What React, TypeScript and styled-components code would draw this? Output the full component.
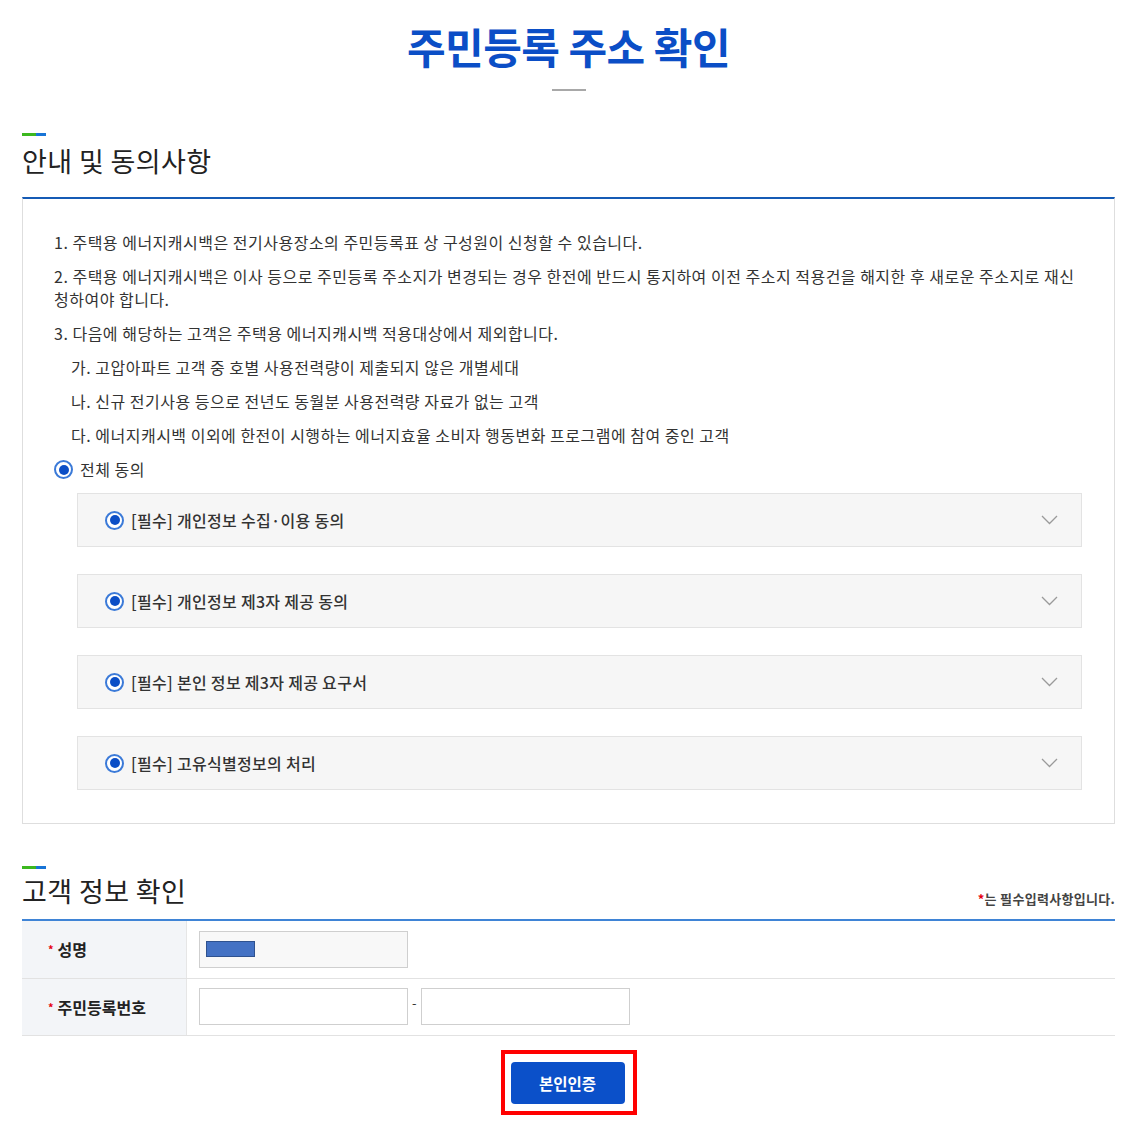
import React from 'react'
import styled, { createGlobalStyle } from 'styled-components'

const GlobalStyle = createGlobalStyle`
    html, body {
        margin: 0;
        padding: 0;
        background: #fff;
    }
    body {
        font-family: 'Noto Sans CJK KR', 'Noto Sans', sans-serif;
        color: #333;
    }
    * {
        box-sizing: border-box;
    }
`

const Page = styled.div`
    width: 1093px;
    margin-left: 22px;
    padding-bottom: 10px;
`

const TitleWrap = styled.div`
    display: flex;
    flex-direction: column;
    align-items: center;
    padding-top: 21px;
`

const Title = styled.h1`
    margin: 0;
    font-size: 42px;
    line-height: 50px;
    font-weight: 700;
    color: #0b4ec6;
    letter-spacing: -0.5px;
`

const TitleDash = styled.span`
    display: block;
    width: 34px;
    height: 2px;
    margin-top: 18px;
    background: #a8a8a8;
`

const SectionHead = styled.div<{ $top: number; $gap: number }>`
    margin-top: ${(p) => p.$top}px;
    &::before {
        content: '';
        display: block;
        width: 24px;
        height: 3px;
        margin-bottom: ${(p) => p.$gap}px;
        background: linear-gradient(90deg, #3cb81e 0 14px, #1874d6 14px 24px);
    }
`

const HeadRow = styled.div<{ $bottom: number }>`
    display: flex;
    justify-content: space-between;
    align-items: flex-end;
    margin-bottom: ${(p) => p.$bottom}px;
`

const SectionTitle = styled.h2`
    margin: 0;
    font-size: 27px;
    line-height: 34px;
    font-weight: 400;
    color: #222;
    letter-spacing: 0.4px;
`

const Note = styled.span`
    font-size: 13px;
    line-height: 18px;
    font-weight: 700;
    color: #444;
    letter-spacing: 0.3px;
`

const Star = styled.span`
    color: #e60012;
`

const AgreeBox = styled.div`
    border-top: 2px solid #155bb5;
    border-left: 1px solid #dedede;
    border-right: 1px solid #dedede;
    border-bottom: 1px solid #dedede;
    padding: 32px 32px 33px 31px;
`

const List = styled.ol`
    list-style: none;
    margin: 0;
    padding: 0;
`

const Item = styled.li<{ $sub?: boolean }>`
    font-size: 16px;
    line-height: 23px;
    margin-bottom: 11px;
    padding-left: ${(p) => (p.$sub ? 17 : 0)}px;
    color: #333;
    letter-spacing: 0.5px;
`

const RadioLabel = styled.label`
    display: flex;
    align-items: center;
    gap: 7px;
    font-size: 16px;
    line-height: 23px;
    color: #333;
    letter-spacing: 0.5px;
`

const Radio = styled.span`
    flex: none;
    width: 19px;
    height: 19px;
    border-radius: 50%;
    border: 2px solid #3b7ad8;
    background: #fff;
    display: flex;
    align-items: center;
    justify-content: center;
    &::after {
        content: '';
        width: 10px;
        height: 10px;
        border-radius: 50%;
        background: #0b4ec6;
    }
`

const Accordions = styled.div`
    margin-left: 23px;
    margin-top: 12px;
    display: flex;
    flex-direction: column;
    gap: 27px;
`

const AccItem = styled.div`
    height: 54px;
    display: flex;
    align-items: center;
    justify-content: space-between;
    padding: 0 23px 0 27px;
    background: #f6f6f6;
    border: 1px solid #e3e3e3;
`

const AccText = styled.span`
    font-weight: 500;
    letter-spacing: 0.3px;
`

const Chevron = () => (
    <svg width="17" height="10" viewBox="0 0 17 10">
        <polyline
            points="1,1 8.5,8.5 16,1"
            fill="none"
            stroke="#9a9a9a"
            strokeWidth="1.3"
        />
    </svg>
)

const InfoTable = styled.div`
    border-top: 2px solid #3f84d6;
`

const Row = styled.div`
    display: grid;
    grid-template-columns: 165px 1fr;
    border-bottom: 1px solid #e2e2e2;
    height: 57.5px;
`

const LabelCell = styled.div`
    display: flex;
    align-items: center;
    padding-left: 26px;
    background: #f3f5f8;
    border-right: 1px solid #e6e6e6;
    font-size: 16px;
    font-weight: 700;
    color: #222;
`

const LabelStar = styled.span`
    color: #e60012;
    font-size: 11px;
    margin-right: 4px;
`

const FieldCell = styled.div`
    display: flex;
    align-items: center;
    padding-left: 12px;
    gap: 4px;
`

const Field = styled.div<{ $readonly?: boolean }>`
    width: 209px;
    height: 37px;
    border: 1px solid #cfcfcf;
    background: ${(p) => (p.$readonly ? '#f8f8f8' : '#fff')};
    display: flex;
    align-items: center;
    padding-left: 6px;
`

const Masked = styled.span`
    display: block;
    width: 49px;
    height: 16px;
    background: #4472c4;
    border: 1px solid #2f528f;
`

const Hyphen = styled.span`
    font-size: 13px;
    color: #333;
    margin-bottom: 8px;
`

const ButtonRow = styled.div`
    display: flex;
    justify-content: center;
    margin-top: 14px;
`

const Highlight = styled.div`
    border: 4px solid #ff0000;
    padding: 8px 8px 7px 6px;
`

const AuthButton = styled.button`
    width: 114px;
    height: 42px;
    border: none;
    border-radius: 4px;
    background: #0b50c9;
    color: #fff;
    font-family: 'Noto Sans CJK KR', sans-serif;
    font-size: 15.5px;
    font-weight: 700;
    cursor: pointer;
`

const agreements = [
    '[필수] 개인정보 수집·이용 동의',
    '[필수] 개인정보 제3자 제공 동의',
    '[필수] 본인 정보 제3자 제공 요구서',
    '[필수] 고유식별정보의 처리',
]

export default function App() {
    return (
        <>
            <GlobalStyle />
            <Page>
                <TitleWrap>
                    <Title>주민등록 주소 확인</Title>
                    <TitleDash />
                </TitleWrap>

                <SectionHead $top={42} $gap={8}>
                    <HeadRow $bottom={19}>
                        <SectionTitle>안내 및 동의사항</SectionTitle>
                    </HeadRow>
                </SectionHead>
                <AgreeBox>
                    <List>
                        <Item>
                            1. 주택용 에너지캐시백은 전기사용장소의 주민등록표 상
                            구성원이 신청할 수 있습니다.
                        </Item>
                        <Item>
                            2. 주택용 에너지캐시백은 이사 등으로 주민등록 주소지가
                            변경되는 경우 한전에 반드시 통지하여 이전 주소지
                            적용건을 해지한 후 새로운 주소지로 재신청하여야
                            합니다.
                        </Item>
                        <Item>
                            3. 다음에 해당하는 고객은 주택용 에너지캐시백
                            적용대상에서 제외합니다.
                        </Item>
                        <Item $sub>
                            가. 고압아파트 고객 중 호별 사용전력량이 제출되지 않은
                            개별세대
                        </Item>
                        <Item $sub>
                            나. 신규 전기사용 등으로 전년도 동월분 사용전력량
                            자료가 없는 고객
                        </Item>
                        <Item $sub>
                            다. 에너지캐시백 이외에 한전이 시행하는 에너지효율
                            소비자 행동변화 프로그램에 참여 중인 고객
                        </Item>
                    </List>
                    <RadioLabel>
                        <Radio />
                        전체 동의
                    </RadioLabel>
                    <Accordions>
                        {agreements.map((a) => (
                            <AccItem key={a}>
                                <RadioLabel>
                                    <Radio />
                                    <AccText>{a}</AccText>
                                </RadioLabel>
                                <Chevron />
                            </AccItem>
                        ))}
                    </Accordions>
                </AgreeBox>

                <SectionHead $top={42} $gap={5}>
                    <HeadRow $bottom={11}>
                        <SectionTitle>고객 정보 확인</SectionTitle>
                        <Note>
                            <Star>*</Star>는 필수입력사항입니다.
                        </Note>
                    </HeadRow>
                </SectionHead>
                <InfoTable>
                    <Row>
                        <LabelCell>
                            <LabelStar>*</LabelStar>성명
                        </LabelCell>
                        <FieldCell>
                            <Field $readonly>
                                <Masked />
                            </Field>
                        </FieldCell>
                    </Row>
                    <Row>
                        <LabelCell>
                            <LabelStar>*</LabelStar>주민등록번호
                        </LabelCell>
                        <FieldCell>
                            <Field />
                            <Hyphen>-</Hyphen>
                            <Field />
                        </FieldCell>
                    </Row>
                </InfoTable>

                <ButtonRow>
                    <Highlight>
                        <AuthButton>본인인증</AuthButton>
                    </Highlight>
                </ButtonRow>
            </Page>
        </>
    )
}
